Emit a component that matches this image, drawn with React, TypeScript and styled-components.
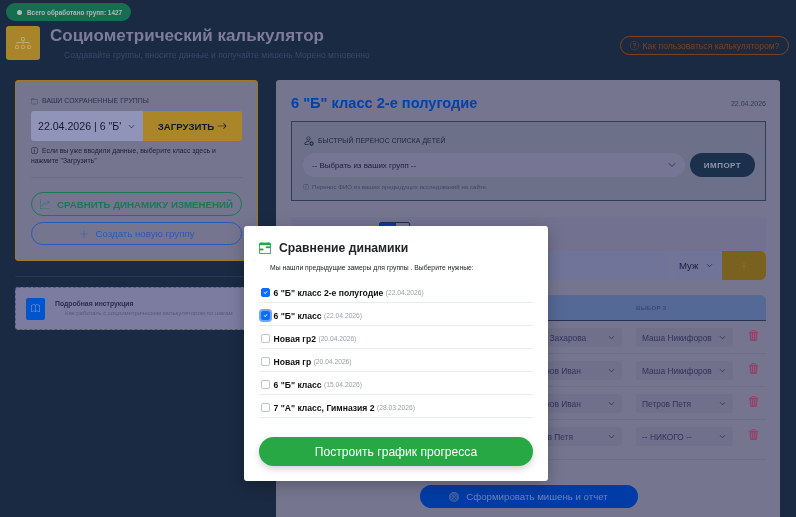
import React from "react";
import styled, { createGlobalStyle } from "styled-components";
import {
  BsDiagram3, BsFolder, BsInfoCircle, BsArrowRight, BsGraphUpArrow, BsPlusLg, BsBook,
  BsPersonGear, BsQuestionCircle, BsTrash3Fill, BsCalendarRange, BsChevronDown, BsBullseye, BsCheck,
} from "react-icons/bs";

const Global = createGlobalStyle`
  html, body { margin: 0; padding: 0; }
  body { font-family: "Liberation Sans", Arial, sans-serif; background: #1a2a42; }
  * { box-sizing: border-box; }
`;

const Page = styled.div`
  width: 796px;
  height: 517px;
  overflow: hidden;
  background: #1a2a42;
  padding: 3px 7px 0 6px;
  display: flex;
  flex-direction: column;
  filter: blur(0.4px);
`;

const StatPill = styled.div`
  width: 125px;
  height: 18px;
  border-radius: 9px;
  background: #166e50;
  color: #a8bcb8;
  font-size: 6.4px;
  font-weight: 700;
  white-space: nowrap;
  display: flex;
  align-items: center;
  gap: 5px;
  padding-left: 11px;
  &::before {
    content: "";
    width: 5px;
    height: 5px;
    border-radius: 50%;
    background: #a8bcb8;
  }
`;

const Header = styled.header`
  display: flex;
  align-items: flex-start;
  margin-top: 5px;
  height: 34px;
`;

const Logo = styled.div`
  width: 34px;
  height: 34px;
  border-radius: 3px;
  background: #a8842a;
  color: #bea86e;
  font-size: 16px;
  display: flex;
  align-items: center;
  justify-content: center;
  flex: none;
`;

const HeaderText = styled.div`
  margin-left: 10px;
  flex: 1;
`;

const Title = styled.h1`
  margin: 0;
  font-size: 17px;
  line-height: 20px;
  font-weight: 700;
  color: #7d7d9a;
`;

const Subtitle = styled.p`
  margin: 3px 0 0 14px;
  font-size: 8.5px;
  line-height: 12px;
  color: #3c466a;
`;

const HelpButton = styled.div`
  margin-top: 10px;
  height: 19px;
  width: 169px;
  border: 1px solid #7d4120;
  border-radius: 10px;
  color: #7d4120;
  font-size: 8.6px;
  white-space: nowrap;
  display: flex;
  align-items: center;
  justify-content: center;
  gap: 4px;
  svg { font-size: 9px; }
`;

const Columns = styled.div`
  display: flex;
  margin: 20px 0 0 9px;
  gap: 18px;
  flex: 1;
  min-height: 0;
`;

const Sidebar = styled.aside`
  width: 243px;
  flex: none;
`;

const SavedCard = styled.section`
  height: 181px;
  background: #757590;
  border: 1px solid #9d7a22;
  border-radius: 3px;
  padding: 15px;
`;

const SmallLabel = styled.div`
  display: flex;
  align-items: center;
  gap: 4px;
  font-size: 6.8px;
  line-height: 10px;
  color: #2a2e48;
  font-weight: 400;
  letter-spacing: 0.1px;
  svg { font-size: 7px; opacity: 0.7; }
`;

const LoadRow = styled.div`
  display: flex;
  height: 30px;
  margin-top: 5px;
`;

const LoadSelect = styled.div`
  width: 112px;
  background: #8f94b8;
  border-radius: 3px 0 0 3px;
  color: #1a1a32;
  font-size: 10.6px;
  display: flex;
  align-items: center;
  justify-content: space-between;
  padding: 0 8px 0 7px;
  white-space: nowrap;
  overflow: hidden;
  svg { font-size: 7px; flex: none; }
`;

const LoadButton = styled.div`
  width: 99px;
  background: #aa8628;
  border-radius: 0 3px 3px 0;
  color: #14142a;
  font-size: 9.6px;
  font-weight: 700;
  display: flex;
  align-items: center;
  justify-content: center;
  gap: 3px;
  svg { font-size: 10px; }
`;

const Note = styled.p`
  margin: 5px 0 0;
  font-size: 6.85px;
  line-height: 10px;
  color: #1e1e3a;
  svg { font-size: 7px; margin-right: 4px; vertical-align: -1px; }
`;

const CardDivider = styled.hr`
  border: 0;
  border-top: 1px solid #6c6c88;
  margin: 11px 0 14px;
`;

const OutlineButton = styled.div<{ $color: string; $h: number; $bold?: boolean; $size: number }>`
  height: ${(p) => p.$h}px;
  border: 1px solid ${(p) => p.$color};
  border-radius: 12px;
  color: ${(p) => p.$color};
  font-size: ${(p) => p.$size}px;
  font-weight: ${(p) => (p.$bold ? 700 : 400)};
  display: flex;
  align-items: center;
  justify-content: center;
  gap: 7px;
  margin-bottom: 6px;
  white-space: nowrap;
  svg { font-size: 10px; opacity: 0.75; }
`;

const SideDivider = styled.hr`
  border: 0;
  border-top: 1px solid #253858;
  margin: 15px 0 10px;
`;

const GuideCard = styled.section`
  height: 43px;
  background: #7c7ca0;
  border: 1px dashed #505a96;
  border-radius: 3px;
  padding: 0 10px;
  display: flex;
  align-items: center;
  gap: 10px;
`;

const GuideIcon = styled.div`
  width: 19px;
  height: 22px;
  border-radius: 2px;
  background: #0055cd;
  color: #8f9bd0;
  font-size: 9px;
  display: flex;
  align-items: center;
  justify-content: center;
  flex: none;
`;

const GuideTitle = styled.div`
  font-size: 6.8px;
  font-weight: 700;
  line-height: 9px;
  color: #2a2e50;
`;

const GuideSub = styled.div`
  font-size: 6.05px;
  line-height: 9px;
  margin: 1px 0 0 10px;
  color: #555a80;
  white-space: nowrap;
`;

const Main = styled.main`
  width: 504px;
  flex: none;
  background: #757590;
  border-radius: 3px 3px 0 0;
  padding: 14px 14px 0 15px;
`;

const MainHead = styled.div`
  display: flex;
  align-items: center;
  justify-content: space-between;
  height: 18px;
`;

const GroupTitle = styled.h2`
  margin: 0;
  font-size: 14.6px;
  font-weight: 700;
  color: #0541aa;
`;

const DateText = styled.span`
  font-size: 7px;
  color: #323858;
`;

const ImportBox = styled.section`
  margin-top: 9px;
  height: 80px;
  background: #6c7089;
  border: 1px solid #323c5a;
  padding: 13px 10px 0 11px;
`;

const ImportLabel = styled(SmallLabel)`
  color: #21253d;
  svg { font-size: 11px; opacity: 1; }
`;

const ImportRow = styled.div`
  display: flex;
  gap: 5px;
  margin-top: 7px;
  height: 24px;
`;

const PillSelect = styled.div`
  flex: 1;
  background: #767694;
  border-radius: 12px;
  font-size: 7.9px;
  color: #1e1e3a;
  display: flex;
  align-items: center;
  justify-content: space-between;
  padding: 0 9px;
  svg { font-size: 8px; }
`;

const ImportButton = styled.div`
  width: 65px;
  border-radius: 12px;
  background: #1a304b;
  color: #9096ae;
  font-size: 8px;
  font-weight: 700;
  letter-spacing: 0.5px;
  display: flex;
  align-items: center;
  justify-content: center;
`;

const ImportNote = styled.p`
  margin: 6px 0 0;
  font-size: 6.15px;
  line-height: 8px;
  color: #43466a;
  svg { font-size: 6px; margin-right: 3px; vertical-align: -1px; }
`;

const FormBox = styled.section`
  margin-top: 16px;
  height: 34px;
  background: #727290;
  padding: 5px 0 0 88px;
`;

const Toggle = styled.div`
  width: 31px;
  height: 12px;
  border: 1px solid #1b2e58;
  border-radius: 2px;
  overflow: hidden;
  &::before {
    content: "";
    display: block;
    width: 16px;
    height: 100%;
    background: #003ca5;
  }
`;

const AddRow = styled.div`
  display: flex;
  height: 29px;
`;

const NameInput = styled.div`
  flex: 1;
  background: #6f7498;
  margin-right: 2px;
`;

const GenderSelect = styled.div`
  width: 49px;
  background: #6f7498;
  color: #1e1e3a;
  font-size: 9.6px;
  display: flex;
  align-items: center;
  justify-content: space-between;
  padding: 0 9px 0 6px;
  svg { font-size: 7px; }
`;

const AddButton = styled.div`
  width: 44px;
  background: #7b6120;
  border-radius: 0 6px 6px 0;
  color: #917837;
  font-size: 10px;
  display: flex;
  align-items: center;
  justify-content: center;
`;

const TableHead = styled.div`
  margin-top: 15px;
  height: 26px;
  background: #556996;
  border-radius: 6px 6px 0 0;
  border-bottom: 1px solid #283255;
  display: grid;
  grid-template-columns: 220px 118px 137px;
  align-items: center;
  font-size: 6px;
  font-weight: 700;
  letter-spacing: 0.3px;
  color: #3b4976;
`;

const HeadCell = styled.div`
  padding-left: 7px;
  &:first-child { padding-left: 0; }
`;

const Row = styled.div<{ $last?: boolean }>`
  display: grid;
  grid-template-columns: 220px 118px 111px 26px;
  align-items: flex-start;
  height: ${(p) => (p.$last ? 40 : 33)}px;
  padding-top: 7px;
  border-bottom: 1px solid #6e6e8a;
`;

const Cell = styled.div`
  padding: 0 7px;
`;

const RowSelect = styled.div`
  height: 19px;
  background: #70708c;
  border-radius: 3px;
  font-size: 8.4px;
  color: #32325a;
  display: flex;
  align-items: center;
  justify-content: space-between;
  padding: 0 7px 0 6px;
  white-space: nowrap;
  overflow: hidden;
  span { overflow: hidden; width: 70px; }
  svg { font-size: 7px; flex: none; color: #28284a; }
`;

const TrashCell = styled.div`
  text-align: center;
  color: #96406a;
  font-size: 11px;
  line-height: 11px;
  padding-top: 2px;
`;

const SubmitRow = styled.div`
  display: flex;
  justify-content: center;
  margin-top: 25px;
`;

const SubmitButton = styled.div`
  width: 218px;
  height: 23px;
  border-radius: 12px;
  background: #003ca5;
  color: #6e82b8;
  font-size: 9.7px;
  display: flex;
  align-items: center;
  justify-content: center;
  gap: 7px;
  svg { font-size: 10px; color: #5a6f9e; }
`;

const Modal = styled.div`
  position: fixed;
  left: 244px;
  top: 226px;
  width: 304px;
  height: 255px;
  background: #fff;
  border-radius: 3px;
  padding: 15px;
  box-shadow: 0 4px 16px rgba(0, 0, 0, 0.25);
`;

const ModalHead = styled.div`
  display: flex;
  align-items: center;
  gap: 8px;
  height: 13px;
  color: #212529;
  font-size: 12.2px;
  font-weight: 700;
  svg { font-size: 12px; color: #28a745; stroke: currentColor; stroke-width: 0.4px; }
`;

const Intro = styled.p`
  margin: 9px 0 0 11px;
  font-size: 6.8px;
  line-height: 10px;
  color: #212529;
`;

const List = styled.div`
  margin-top: 7px;
`;

const Item = styled.label`
  display: flex;
  align-items: center;
  height: 23px;
  padding: 3px 0 0 2px;
  gap: 3.5px;
  border-bottom: 1px solid #e9ecef;
  white-space: nowrap;
`;

const Check = styled.span<{ $on?: boolean; $focus?: boolean }>`
  width: 9px;
  height: 9px;
  border-radius: 2px;
  flex: none;
  border: 1px solid ${(p) => (p.$on ? "#0d6efd" : "#bfc4c9")};
  background: ${(p) => (p.$on ? "#0d6efd" : "#fff")};
  color: #fff;
  display: flex;
  align-items: center;
  justify-content: center;
  font-size: 9px;
  box-shadow: ${(p) => (p.$focus ? "0 0 0 2px #6ea8fe" : "none")};
`;

const ItemName = styled.span`
  font-size: 8.6px;
  font-weight: 700;
  color: #111;
`;

const ItemDate = styled.span`
  font-size: 6.7px;
  color: #9aa0a6;
  margin-left: -1px;
`;

const BuildButton = styled.div`
  margin-top: 19px;
  height: 29px;
  border-radius: 15px;
  background: #28a745;
  color: #fff;
  font-size: 12.1px;
  display: flex;
  align-items: center;
  justify-content: center;
  box-shadow: 0 3px 7px rgba(0, 0, 0, 0.18);
`;

const rows = [
  ["Маша Захарова", "Маша Никифорова"],
  ["Смирнов Иван", "Маша Никифорова"],
  ["Смирнов Иван", "Петров Петя"],
  ["Петров Петя", "-- НИКОГО --"],
];

const groups = [
  { name: '6 "Б" класс 2-е полугодие', date: "(22.04.2026)", on: true },
  { name: '6 "Б" класс', date: "(22.04.2026)", on: true, focus: true },
  { name: "Новая гр2", date: "(20.04.2026)" },
  { name: "Новая гр", date: "(20.04.2026)" },
  { name: '6 "Б" класс', date: "(15.04.2026)" },
  { name: '7 "А" класс, Гимназия 2', date: "(28.03.2026)" },
];

export default function App() {
  return (
    <>
      <Global />
      <Page>
        <StatPill>Всего обработано групп: 1427</StatPill>
        <Header>
          <Logo><BsDiagram3 /></Logo>
          <HeaderText>
            <Title>Социометрический калькулятор</Title>
            <Subtitle>Создавайте группы, вносите данные и получайте мишень Морено мгновенно</Subtitle>
          </HeaderText>
          <HelpButton><BsQuestionCircle /> Как пользоваться калькулятором?</HelpButton>
        </Header>
        <Columns>
          <Sidebar>
            <SavedCard>
              <SmallLabel><BsFolder /> ВАШИ СОХРАНЕННЫЕ ГРУППЫ</SmallLabel>
              <LoadRow>
                <LoadSelect>22.04.2026 | 6 "Б' <BsChevronDown /></LoadSelect>
                <LoadButton>ЗАГРУЗИТЬ <BsArrowRight /></LoadButton>
              </LoadRow>
              <Note><BsInfoCircle />Если вы уже вводили данные, выберите класс здесь и<br />нажмите "Загрузить"</Note>
              <CardDivider />
              <OutlineButton $color="#1a7855" $h={24} $size={9.7} $bold><BsGraphUpArrow /> СРАВНИТЬ ДИНАМИКУ ИЗМЕНЕНИЙ</OutlineButton>
              <OutlineButton $color="#2a58bc" $h={23} $size={9.7}><BsPlusLg /> Создать новую группу</OutlineButton>
            </SavedCard>
            <SideDivider />
            <GuideCard>
              <GuideIcon><BsBook /></GuideIcon>
              <div>
                <GuideTitle>Подробная инструкция</GuideTitle>
                <GuideSub>Как работать с социометрическим калькулятором по шагам</GuideSub>
              </div>
            </GuideCard>
          </Sidebar>
          <Main>
            <MainHead>
              <GroupTitle>6 "Б" класс 2-е полугодие</GroupTitle>
              <DateText>22.04.2026</DateText>
            </MainHead>
            <ImportBox>
              <ImportLabel><BsPersonGear /> БЫСТРЫЙ ПЕРЕНОС СПИСКА ДЕТЕЙ</ImportLabel>
              <ImportRow>
                <PillSelect>-- Выбрать из ваших групп -- <BsChevronDown /></PillSelect>
                <ImportButton>ИМПОРТ</ImportButton>
              </ImportRow>
              <ImportNote><BsInfoCircle />Перенос ФИО из ваших предыдущих исследований на сайте.</ImportNote>
            </ImportBox>
            <FormBox><Toggle /></FormBox>
            <AddRow>
              <NameInput />
              <GenderSelect>Муж <BsChevronDown /></GenderSelect>
              <AddButton><BsPlusLg /></AddButton>
            </AddRow>
            <TableHead>
              <HeadCell>ВЫБОР 1</HeadCell>
              <HeadCell>ВЫБОР 2</HeadCell>
              <HeadCell>ВЫБОР 3</HeadCell>
            </TableHead>
            {rows.map((r, i) => (
              <Row key={i} $last={i === 3}>
                <Cell />
                <Cell><RowSelect><span>{r[0]}</span><BsChevronDown /></RowSelect></Cell>
                <Cell><RowSelect><span>{r[1]}</span><BsChevronDown /></RowSelect></Cell>
                <TrashCell><BsTrash3Fill /></TrashCell>
              </Row>
            ))}
            <SubmitRow>
              <SubmitButton><BsBullseye /> Сформировать мишень и отчет</SubmitButton>
            </SubmitRow>
          </Main>
        </Columns>
      </Page>
      <Modal>
        <ModalHead><BsCalendarRange /> Сравнение динамики</ModalHead>
        <Intro>Мы нашли предыдущие замеры для группы . Выберите нужные:</Intro>
        <List>
          {groups.map((g, i) => (
            <Item key={i}>
              <Check $on={g.on} $focus={g.focus}>{g.on && <BsCheck />}</Check>
              <ItemName>{g.name}</ItemName>
              <ItemDate>{g.date}</ItemDate>
            </Item>
          ))}
        </List>
        <BuildButton>Построить график прогресса</BuildButton>
      </Modal>
    </>
  );
}
